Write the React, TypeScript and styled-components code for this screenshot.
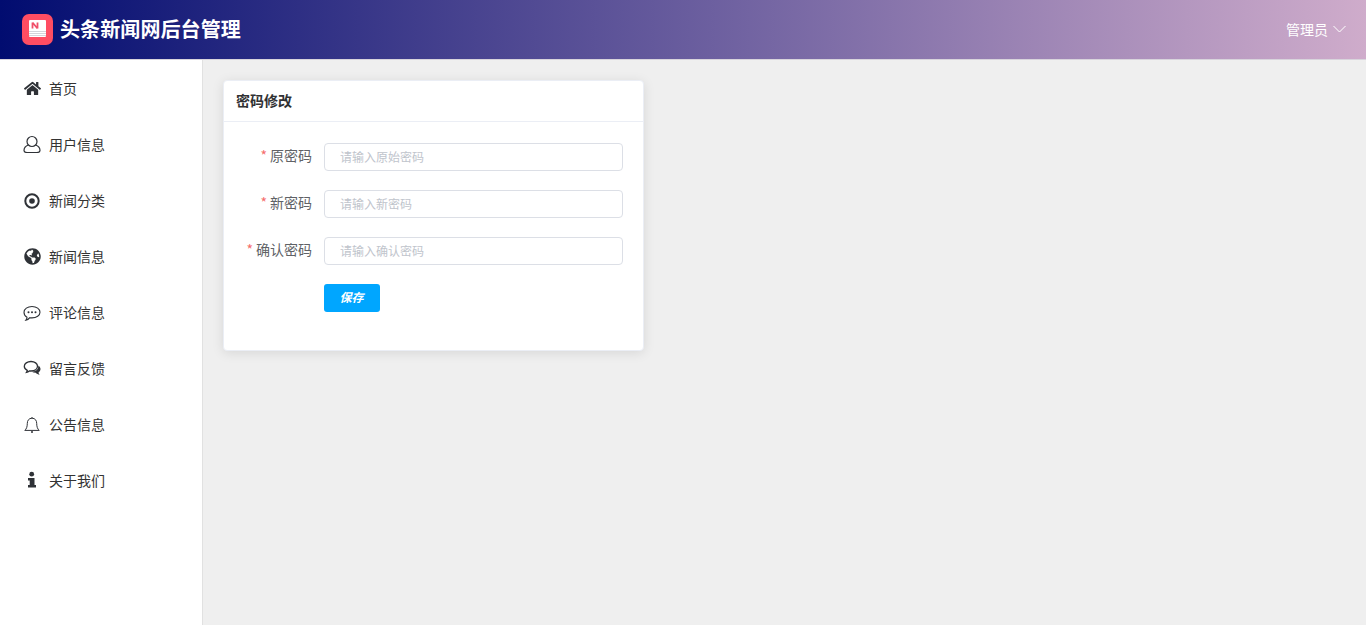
import React from "react";
import styled, { createGlobalStyle } from "styled-components";
import { FaHome, FaGlobeAmericas } from "react-icons/fa";

const Global = createGlobalStyle`
  html, body { margin: 0; padding: 0; height: 100%; overflow: hidden; }
  body { font-family: "Noto Sans CJK SC", "Liberation Sans", sans-serif; background: #fff; }
  * { box-sizing: border-box; }
  ::placeholder { color: #c0c4cc; opacity: 1; }
`;
const Page = styled.div`display: flex; flex-direction: column; height: 625px; width: 1366px;`;
const Header = styled.header`
  height: 60px; flex: none; display: flex; align-items: center; justify-content: space-between;
  padding: 0 20px 1px 22px; background: linear-gradient(90deg, #010c70 0%, #cfaccb 100%);
  border-bottom: 1px solid #d8d4dc;
`;
const Brand = styled.div`display: flex; align-items: center; gap: 7px;`;
const Title = styled.div`color: #fff; font-size: 20px; font-weight: 700; line-height: 28px; letter-spacing: .1px;`;
const UserBox = styled.div`display: flex; align-items: center; gap: 5px; color: #fff; font-size: 14px;`;
const Body = styled.div`display: flex; flex: 1; min-height: 0;`;
const Side = styled.nav`width: 203px; flex: none; background: #fff; border-right: 1px solid #e1e1e1;`;
const Item = styled.div`
  height: 56px; display: flex; align-items: center; padding-left: 23px; gap: 8px;
  font-size: 14px; color: #333;
`;
const IconBox = styled.span`width: 18px; display: flex; justify-content: center; align-items: center; color: #2f3237; font-size: 17px;`;
const Main = styled.main`flex: 1; background: #efefef; padding: 20px;`;
const Card = styled.section`
  width: 421px; height: 271px; background: #fff; border-radius: 4px; border: 1px solid #ebeef5;
  box-shadow: 0 2px 12px rgba(0,0,0,.1);
`;
const CardHead = styled.div`
  height: 41px; padding: 0 12px 2px; display: flex; align-items: center; border-bottom: 1px solid #ebeef5;
  font-size: 14px; font-weight: 700; color: #303133;
`;
const Form = styled.div`padding: 21px 20px 0 0; display: flex; flex-direction: column; gap: 19px;`;
const Row = styled.div`display: flex; align-items: center; height: 28px;`;
const Label = styled.label`width: 100px; padding: 0 12px 5px 0; text-align: right; font-size: 14px; color: #606266; flex: none;`;
const Star = styled.span`color: #f56c6c; margin-right: 3px;`;
const Input = styled.input`
  flex: 1; height: 28px; border: 1px solid #dcdfe6; border-radius: 4px; padding: 0 15px 1px;
  font: 12px "Noto Sans CJK SC", sans-serif; color: #606266; outline: none; background: #fff;
`;
const SaveRow = styled.div`display: flex; padding-left: 100px;`;
const Save = styled.button`
  width: 56px; height: 28px; border: 0; border-radius: 3px; background: #00a6ff; color: #fff;
  font: italic 700 12px "Noto Sans CJK SC", sans-serif; padding: 0 1px 3px 0;
`;

const Logo = () => (
  <svg width="31" height="31" viewBox="0 0 31 31">
    <rect width="31" height="31" rx="7" fill="#ff4d62" />
    <rect x="7" y="6" width="17" height="17" rx="1" fill="#fff" />
    <path d="M7 17.500h17M7 19.500h17M7 21.500h17" stroke="#d4d4da" strokeWidth="1" />
    <path d="M10.500 8.500v6M15.500 8.500v6M10.500 8.500l5 6" stroke="#f0506a" strokeWidth="1.800" fill="none" />
  </svg>
);

const Icon = ({ children, dy = 0 }: { children: React.ReactNode; dy?: number }) => (
  <svg width="18" height="18" viewBox={`0 ${-dy} 18 18`} fill="none" stroke="currentColor">{children}</svg>
);

const UserO = () => (
  <Icon dy={1}>
    <ellipse cx="9" cy="5.500" rx="5" ry="5" strokeWidth="1.200" />
    <path d="M5.500 9C2.500 10 1 12 1 14.500 1 16 2.500 16.500 4 16.500h10c1.500 0 3-.5 3-2 0-2.500-1.500-4.500-4.500-5.500" strokeWidth="1.200" />
  </Icon>
);
const DotCircle = () => (
  <Icon dy={1}>
    <circle cx="9" cy="9" r="6.700" strokeWidth="2" />
    <circle cx="9" cy="9" r="2.800" fill="currentColor" stroke="none" />
  </Icon>
);
const CommentO = () => (
  <Icon dy={1}>
    <path d="M9 2.500c4.500 0 8 2.500 8 5.700s-3.500 5.700-8 5.700c-.8 0-1.500-.1-2.200-.2C5.800 15 4.500 16 2.800 16.300c.7-.9 1.200-1.900 1.200-3.100C2.200 12.200 1 10.300 1 8.200 1 5 4.500 2.500 9 2.500z" strokeWidth="1.100" />
    <circle cx="5.500" cy="8.300" r="1" fill="currentColor" stroke="none" />
    <circle cx="9" cy="8.300" r="1" fill="currentColor" stroke="none" />
    <circle cx="12.500" cy="8.300" r="1" fill="currentColor" stroke="none" />
  </Icon>
);
const CommentsO = () => (
  <Icon>
    <path d="M8 2.500c3.700 0 6.500 2.100 6.500 4.800S11.700 12 8 12c-.6 0-1.100 0-1.700-.1-.8.700-1.800 1.200-2.800 1.400.4-.6.700-1.200.8-1.900C2.500 10.600 1.300 9.100 1.300 7.300 1.300 4.600 4.300 2.500 8 2.500z" strokeWidth="1.300" />
    <path d="M15.300 6.500c1.300.9 2.200 2.100 2.200 3.500 0 1.400-.8 2.600-2 3.400.1.900.5 1.600 1.200 2.300-1.600-.1-3.100-.9-4-2-1.500 0-2.900-.4-4-1 3.600 0 7-2 6.600-6.200z" fill="currentColor" stroke="none" />
  </Icon>
);
const BellO = () => (
  <Icon dy={1}>
    <path d="M9 2.200c-3.200 0-4.700 2.400-4.700 5.200 0 3.500-.9 5.600-2.500 7h14.400c-1.600-1.400-2.500-3.500-2.500-7 0-2.800-1.500-5.200-4.700-5.200z" strokeWidth="1" />
    <path d="M9 1v1.200" strokeWidth="1" />
    <circle cx="9" cy="16" r="1" fill="currentColor" stroke="none" />
  </Icon>
);
const InfoI = () => (
  <Icon>
    <circle cx="8.700" cy="3.200" r="2.400" fill="currentColor" stroke="none" />
    <path d="M5 7h6.500v7h1.500v2.500H5V14h1.700V9.500H5z" fill="currentColor" stroke="none" />
  </Icon>
);

const menu = [
  [FaHome, "首页"], [UserO, "用户信息"], [DotCircle, "新闻分类"], [FaGlobeAmericas, "新闻信息"],
  [CommentO, "评论信息"], [CommentsO, "留言反馈"], [BellO, "公告信息"], [InfoI, "关于我们"],
] as const;

const fields = [
  ["原密码", "请输入原始密码"], ["新密码", "请输入新密码"], ["确认密码", "请输入确认密码"],
];

export default function App() {
  return (
    <Page>
      <Global />
      <Header>
        <Brand><Logo /><Title>头条新闻网后台管理</Title></Brand>
        <UserBox>管理员
          <svg width="13" height="8" viewBox="0 0 13 8" fill="none" stroke="#fff" strokeWidth="1"><path d="M.5 1l6 6 6-6" /></svg>
        </UserBox>
      </Header>
      <Body>
        <Side>
          {menu.map(([I, t]) => (
            <Item key={t}><IconBox><I /></IconBox>{t}</Item>
          ))}
        </Side>
        <Main>
          <Card>
            <CardHead>密码修改</CardHead>
            <Form>
              {fields.map(([l, p]) => (
                <Row key={l}>
                  <Label><Star>*</Star>{l}</Label>
                  <Input placeholder={p} />
                </Row>
              ))}
              <SaveRow><Save>保存</Save></SaveRow>
            </Form>
          </Card>
        </Main>
      </Body>
    </Page>
  );
}
